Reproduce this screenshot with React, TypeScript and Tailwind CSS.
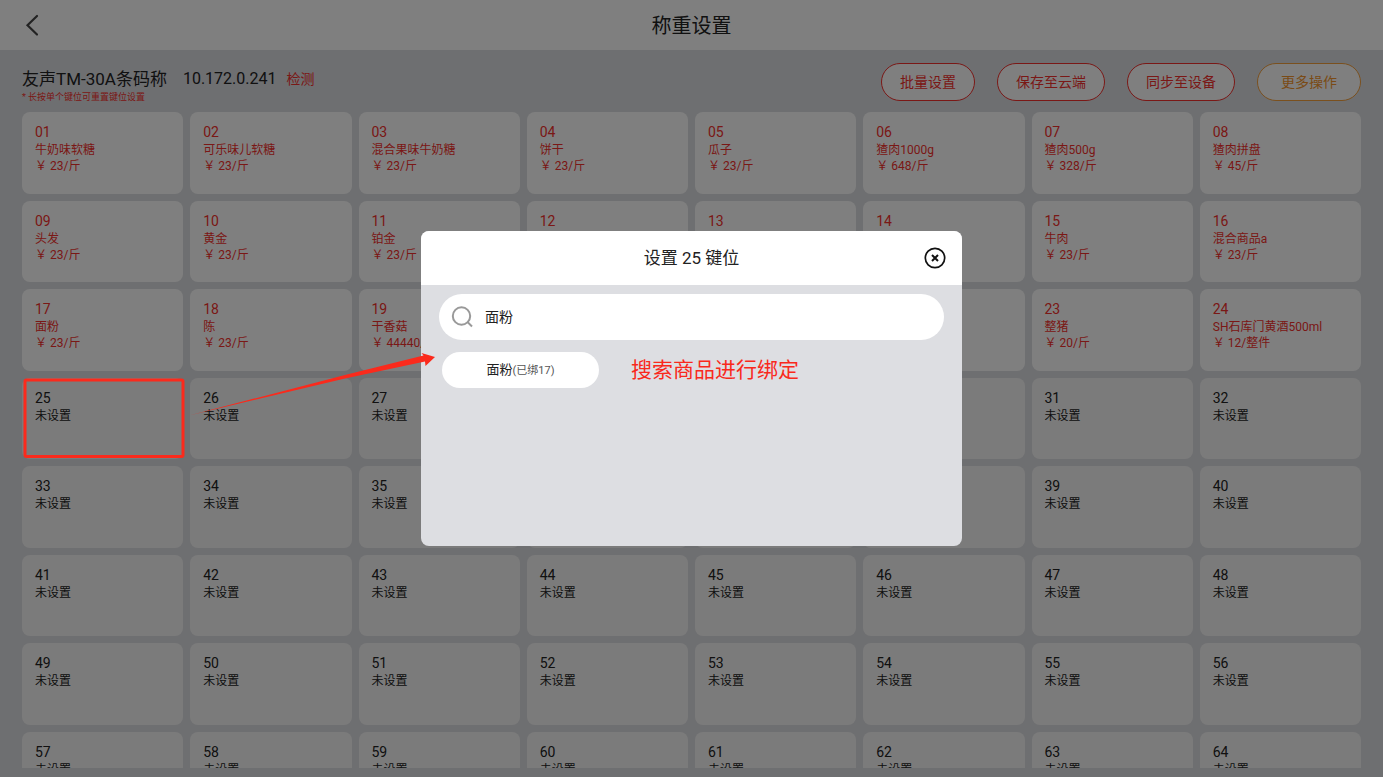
import { useState } from "react";

type Product = { name: string; price: string };

const products: Product[] = [
  { name: "牛奶味软糖", price: "23/斤" },
  { name: "可乐味儿软糖", price: "23/斤" },
  { name: "混合果味牛奶糖", price: "23/斤" },
  { name: "饼干", price: "23/斤" },
  { name: "瓜子", price: "23/斤" },
  { name: "猹肉1000g", price: "648/斤" },
  { name: "猹肉500g", price: "328/斤" },
  { name: "猹肉拼盘", price: "45/斤" },
  { name: "头发", price: "23/斤" },
  { name: "黄金", price: "23/斤" },
  { name: "铂金", price: "23/斤" },
  { name: "", price: "" },
  { name: "", price: "" },
  { name: "", price: "" },
  { name: "牛肉", price: "23/斤" },
  { name: "混合商品a", price: "23/斤" },
  { name: "面粉", price: "23/斤" },
  { name: "陈", price: "23/斤" },
  { name: "干香菇", price: "44440/斤" },
  { name: "", price: "" },
  { name: "", price: "" },
  { name: "", price: "" },
  { name: "整猪", price: "20/斤" },
  { name: "SH石库门黄酒500ml", price: "12/整件" },
];

const slots = Array.from({ length: 64 }, (_, i) => ({
  id: String(i + 1).padStart(2, "0"),
  product: products[i],
}));

function Slot({ id, product }: { id: string; product?: Product }) {
  return (
    <button
      type="button"
      className={
        product
          ? "flex min-w-0 flex-col items-start rounded-lg bg-white px-[13px] pt-3 text-left text-[#f5302c]"
          : "flex min-w-0 flex-col items-start rounded-lg bg-[#f7f7f7] px-[13px] pt-3 text-left text-[#222222]"
      }
    >
      <span className="mb-0.5 text-sm leading-4">{id}</span>
      <span className="text-xs leading-4 whitespace-nowrap">{product ? product.name : "未设置"}</span>
      {product?.price && <span className="text-xs leading-4 whitespace-nowrap">￥ {product.price}</span>}
    </button>
  );
}

const redPill = "h-[38px] rounded-full border border-[#f5302c] bg-white px-[18px] text-sm text-[#f5302c]";

export default function App() {
  const [query, setQuery] = useState("面粉");

  return (
    <div className="relative h-screen overflow-hidden bg-[#dddee2] font-['Roboto','Noto_Sans_CJK_SC',sans-serif] text-[#222222]">
      <div className="flex h-full flex-col pb-[9px]">
        <header className="grid h-[50px] shrink-0 grid-cols-[1fr_auto_1fr] items-center bg-white px-[22px]">
          <button type="button" aria-label="返回" className="flex h-8 w-8 items-center">
            <svg width="20" height="24" viewBox="0 0 20 24" fill="none" stroke="#444444" strokeWidth="2.200" strokeLinecap="round">
              <path d="M15 3 5.500 12.200 15 21.500" />
            </svg>
          </button>
          <h1 className="pt-0.5 text-xl">称重设置</h1>
        </header>

        <section className="flex h-[62px] shrink-0 items-start justify-between px-[22px] pt-[13px]">
          <div className="pt-1">
            <div className="flex items-center leading-6">
              <span className="text-[17px]">友声TM-30A条码称</span>
              <span className="ml-4 text-[16px]">10.172.0.241</span>
              <a href="#check" className="ml-2.5 text-sm text-[#f5302c]">检测</a>
            </div>
            <p className="text-[9px] leading-3 text-[#f5302c]">* 长按单个键位可重置键位设置</p>
          </div>
          <div className="flex gap-[22px]">
            <button type="button" className={redPill}>批量设置</button>
            <button type="button" className={redPill}>保存至云端</button>
            <button type="button" className={redPill}>同步至设备</button>
            <button type="button" className="h-[38px] rounded-full border border-[#f5a03c] bg-white px-[23px] text-sm text-[#f5962c]">
              更多操作
            </button>
          </div>
        </section>

        <main className="min-h-0 flex-1 overflow-hidden px-[22px]">
          <div className="grid h-[701px] grid-cols-8 grid-rows-8 gap-[7px]">
            {slots.map((slot) => (
              <Slot key={slot.id} id={slot.id} product={slot.product} />
            ))}
          </div>
        </main>
      </div>

      <div className="absolute inset-0 flex items-center justify-center bg-black/50">
        <div role="dialog" aria-labelledby="dialog-title" className="flex min-h-[315px] w-[541px] flex-col overflow-hidden rounded-lg bg-[#dddee2]">
          <div className="grid h-[54px] grid-cols-[1fr_auto_1fr] items-center bg-white px-4">
            <h2 id="dialog-title" className="col-start-2 pt-0.5 text-[17px]">设置 25 键位</h2>
            <button type="button" aria-label="关闭" className="justify-self-end">
              <svg width="22" height="22" viewBox="0 0 22 22" fill="none" stroke="#111111" strokeWidth="2">
                <circle cx="11" cy="11" r="9.700" strokeWidth="1.700" />
                <path d="m8 8 6 6m0-6-6 6" />
              </svg>
            </button>
          </div>
          <div className="px-[18px] pt-[9px]">
            <label className="flex h-[46px] items-center rounded-full bg-white pr-6 pl-3">
              <svg width="22" height="22" viewBox="0 0 22 22" fill="none" stroke="#999999" strokeWidth="2">
                <circle cx="10.500" cy="10" r="8.700" />
                <path d="m16.500 16 4.500 4.500" />
              </svg>
              <input
                aria-label="搜索商品"
                value={query}
                onChange={(e) => setQuery(e.target.value)}
                className="ml-3 min-w-0 flex-1 bg-transparent text-sm outline-none"
              />
            </label>
            <div className="mt-3 flex items-center pl-[3px]">
              <button type="button" className="h-9 w-[157px] rounded-full bg-white text-[13px]">
                面粉<span className="text-[11px] text-[#555555]">(已绑17)</span>
              </button>
              <p className="ml-8 text-[21px] leading-9 text-[#f9291c]">搜索商品进行绑定</p>
            </div>
          </div>
        </div>
      </div>

      <svg className="pointer-events-none absolute top-0 left-0" width="450" height="470" viewBox="0 0 450 470" aria-hidden="true">
        <rect x="25" y="380" width="158" height="76.500" rx="1.500" fill="none" stroke="#fb2a1c" strokeWidth="3" />
        <path d="M191 415 345 375 423.500 355.500 421.500 353 435 357 425.500 366 425 361.500 345 378.500Z" fill="#fb2a1c" />
      </svg>
    </div>
  );
}
